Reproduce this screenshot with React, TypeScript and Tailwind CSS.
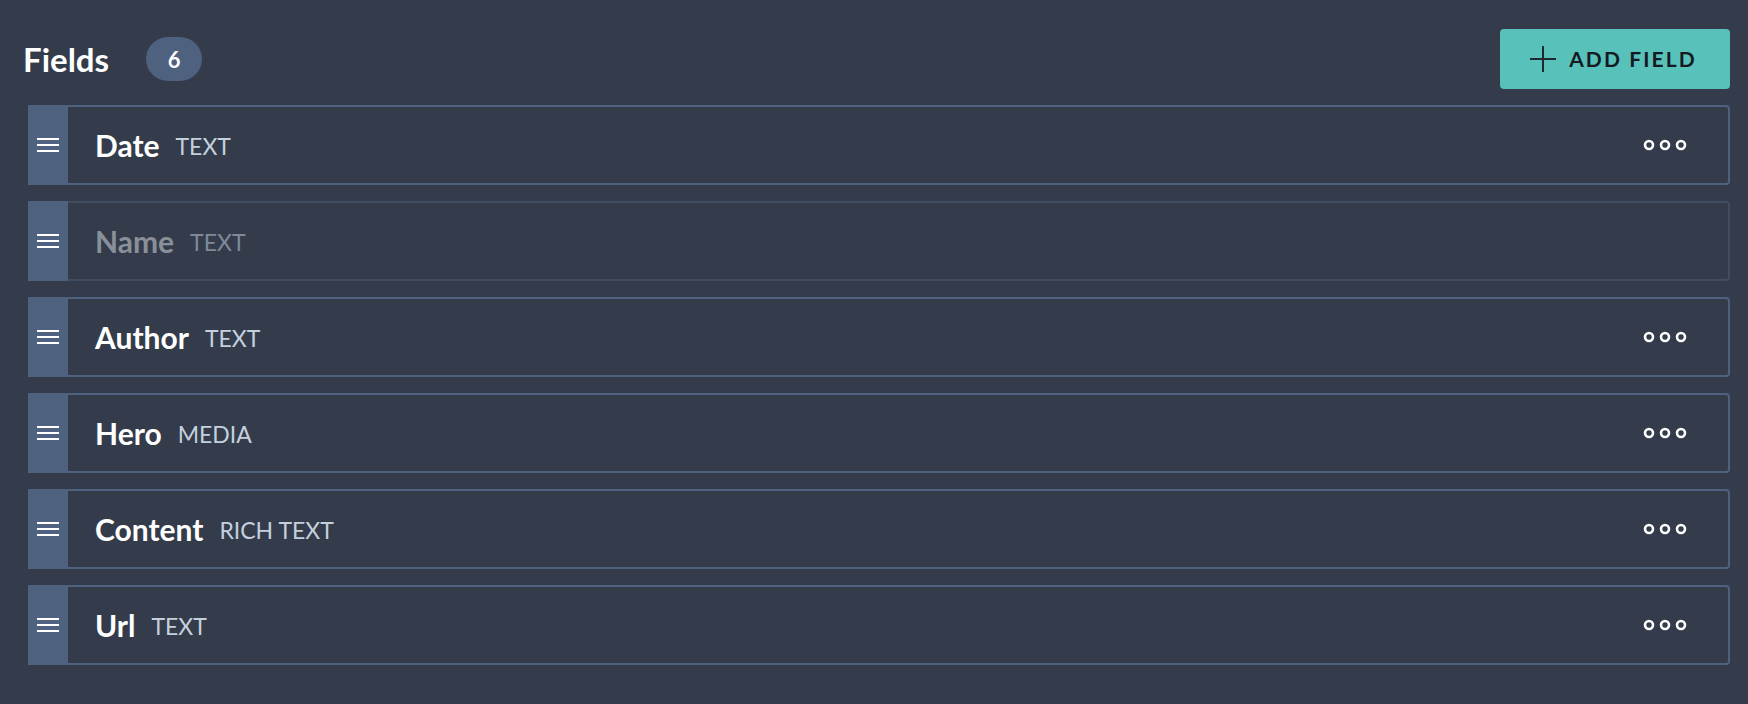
import React from 'react'

type Field = { name: string; type: string; disabled?: boolean }

const fields: Field[] = [
  { name: 'Date', type: 'TEXT' },
  { name: 'Name', type: 'TEXT', disabled: true },
  { name: 'Author', type: 'TEXT' },
  { name: 'Hero', type: 'MEDIA' },
  { name: 'Content', type: 'RICH TEXT' },
  { name: 'Url', type: 'TEXT' },
]

function DragHandle() {
  return (
    <div className="flex h-full w-[40px] shrink-0 flex-col items-center justify-center gap-[4px] bg-[#4e6280]">
      <span className="block h-[2px] w-[22px] bg-white" />
      <span className="block h-[2px] w-[22px] bg-white" />
      <span className="block h-[2px] w-[22px] bg-white" />
    </div>
  )
}

function MoreDots() {
  return (
    <svg width="44" height="14" viewBox="0 0 44 14" fill="none" stroke="white" strokeWidth="2.6">
      <circle cx="6" cy="7" r="4" />
      <circle cx="22" cy="7" r="4" />
      <circle cx="38" cy="7" r="4" />
    </svg>
  )
}

function FieldRow({ field }: { field: Field }) {
  return (
    <div className="flex h-[80px]">
      <DragHandle />
      <div
        className={
          field.disabled
            ? 'flex flex-1 items-center rounded-r-[4px] border-y-2 border-r-2 border-[#414d61] pl-[27px] pr-[41px]'
            : 'flex flex-1 items-center rounded-r-[4px] border-y-2 border-r-2 border-[#4e6280] pl-[27px] pr-[41px]'
        }
      >
        <span
          className={
            field.disabled
              ? 'text-[30px] font-bold text-[#8a9099]'
              : 'text-[30px] font-bold text-white'
          }
        >
          {field.name}
        </span>
        <span
          className={
            field.disabled
              ? 'ml-[16px] mt-[2px] text-[23px] text-[#7e8a99]'
              : 'ml-[16px] mt-[2px] text-[23px] text-[#c3d1de]'
          }
        >
          {field.type}
        </span>
        <div className="flex-1" />
        {!field.disabled && <MoreDots />}
      </div>
    </div>
  )
}

export default function App() {
  return (
    <div
      className="min-h-[704px] bg-[#343c4b] pl-[28px] pr-[18px] pt-[29px]"
      style={{ fontFamily: 'Lato, "Open Sans", sans-serif' }}
    >
      <div className="mb-[16px] flex h-[60px] items-center">
        <h1 className="-ml-[5px] text-[33px] font-bold leading-none text-white">Fields</h1>
        <span className="ml-[37px] flex h-[44px] w-[56px] items-center justify-center rounded-full bg-[#4e6280] text-[22px] font-bold text-white">
          6
        </span>
        <div className="flex-1" />
        <button
          type="button"
          className="flex h-[60px] w-[230px] items-center justify-center gap-[12px] rounded-[4px] bg-[#58c1b9] pr-[4px] text-[21px] font-bold tracking-[0.1em] text-[#141a22]"
        >
          <svg width="28" height="28" viewBox="0 0 28 28" stroke="#1f2a30" strokeWidth="2">
            <path d="M14 1v26M1 14h26" />
          </svg>
          ADD FIELD
        </button>
      </div>
      <div className="flex flex-col gap-[16px]">
        {fields.map((f) => (
          <FieldRow key={f.name} field={f} />
        ))}
      </div>
    </div>
  )
}
